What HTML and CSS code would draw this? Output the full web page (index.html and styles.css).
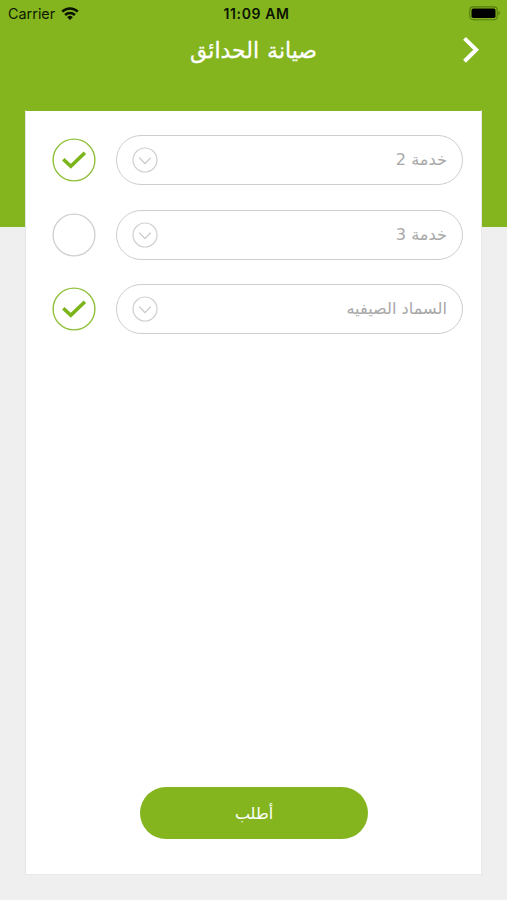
FILE: index.html
```html
<!DOCTYPE html>
<html lang="ar">
<head>
<meta charset="utf-8">
<title>صيانة الحدائق</title>
<link rel="stylesheet" href="styles.css">
</head>
<body>
<svg class="defs" width="0" height="0">
  <symbol id="check" viewBox="0 0 44 44"><circle cx="22" cy="22" r="20.9" fill="none" stroke="#91c13b" stroke-width="1.4"/><path d="M11.3 21.2 18.8 28.3 32.9 14.8" fill="none" stroke="#7cb41b" stroke-width="3.6"/></symbol>
  <symbol id="empty" viewBox="0 0 44 44"><circle cx="22" cy="22" r="20.9" fill="none" stroke="#d0d0d0" stroke-width="1.3"/></symbol>
  <symbol id="drop" viewBox="0 0 26 26"><circle cx="13" cy="13" r="12" fill="none" stroke="#cfcfcf" stroke-width="1.2"/><path d="M7.3 10.6 13 16.6 18.7 10.6" fill="none" stroke="#c8c8c8" stroke-width="1.3"/></symbol>
</svg>
<div class="screen">
  <header class="status">
    <div class="carrier"><span>Carrier</span>
      <svg class="wifi" width="18" height="13" viewBox="0 0 18 13" fill="none" stroke="#0b1303" stroke-width="2.5"><path d="M1.2 4.7a11.2 11.2 0 0 1 15.6 0"/><path d="M4.1 8a7.1 7.1 0 0 1 9.8 0"/><path d="M9 13 6.2 10.2a4 4 0 0 1 5.6 0Z" fill="#0b1303" stroke="none"/></svg>
    </div>
    <div class="time">11:09 AM</div>
    <svg class="battery" width="32" height="15" viewBox="0 0 32 15"><rect x=".8" y=".9" width="27.4" height="12.8" rx="3.4" fill="none" stroke="#55790f" stroke-width="1.1"/><rect x="2.5" y="2.6" width="24" height="9.4" rx="1.8" fill="#000"/><path d="M29.4 5.1v4.4q1.5-.6 1.5-2.2t-1.5-2.2" fill="#55790f"/></svg>
  </header>
  <nav class="nav">
    <h1 class="title" dir="rtl">صيانة الحدائق</h1>
    <svg class="next" width="18" height="28" viewBox="0 0 18 28" fill="none" stroke="#fff" stroke-width="4"><path d="M2.5 2.4 14.2 13.8 2.5 25.2"/></svg>
  </nav>
  <main class="card">
    <div class="row"><svg class="toggle"><use href="#check"/></svg><div class="field"><svg class="drop"><use href="#drop"/></svg><span class="label" dir="rtl">خدمة 2</span></div></div>
    <div class="row"><svg class="toggle"><use href="#empty"/></svg><div class="field"><svg class="drop"><use href="#drop"/></svg><span class="label" dir="rtl">خدمة 3</span></div></div>
    <div class="row"><svg class="toggle"><use href="#check"/></svg><div class="field"><svg class="drop"><use href="#drop"/></svg><span class="label" dir="rtl">السماد الصيفيه</span></div></div>
    <button class="order" dir="rtl">أطلب</button>
  </main>
</div>
</body>
</html>
```
FILE: styles.css
```css
* { box-sizing: border-box; }
body { margin: 0; background: #efefef; font-family: "DejaVu Sans", sans-serif; }
.defs { display: none; }
.screen { height: 900px; overflow: hidden; background: linear-gradient(#84b51e 227px, #efefef 227px); }
.status { height: 28px; display: grid; grid-template-columns: 1fr auto 1fr; align-items: center; padding: 0 6px 0 8px; font-family: Inter, sans-serif; color: #0f1a03; }
.carrier { display: flex; align-items: center; gap: 6px; font-size: 14.4px; margin-top: -1px; }
.wifi { margin-top: -1px; }
.time { font-size: 14px; font-weight: 600; letter-spacing: .6px; color: #0b1303; margin: -2px 0 0 4px; }
.battery { justify-self: end; margin-top: -1px; }
.nav { height: 82px; display: grid; grid-template-columns: 1fr auto 1fr; align-items: start; padding: 0 27px; }
.title { grid-column: 2; margin: 9px 0 0; font-size: 22px; line-height: 28px; font-weight: 400; color: #fff; white-space: nowrap; -webkit-text-stroke: .3px #fff; word-spacing: 1px; }
.next { justify-self: end; margin-top: 8px; }
.card { width: 457px; height: 765px; margin-left: 25px; padding: 24px 18px 35px 28px; background: #fff; border: 1px solid #e9e9e9; border-color: transparent #e9e9e9 #e9e9e9 #e5e5e5; background-clip: padding-box; display: flex; flex-direction: column; gap: 24px; }
.row { display: flex; align-items: center; gap: 20px; height: 50.5px; }
.toggle { width: 44px; height: 44px; margin-left: -2px; flex: none; }
.field { flex: 1; height: 50px; border: 1.5px solid #cecece; border-radius: 25px; display: flex; align-items: center; justify-content: space-between; padding: 0 15px; }
.drop { width: 26px; height: 26px; }
.label { font-size: 16.2px; color: #a8a8a8; line-height: 24px; white-space: nowrap; }
.order { margin: auto 0 0 86px; width: 228px; height: 52px; border: 0; border-radius: 26px; background: #84b51e; color: #fff; font: 16px/24px "DejaVu Sans", sans-serif; padding: 2px 0 0; }
```
